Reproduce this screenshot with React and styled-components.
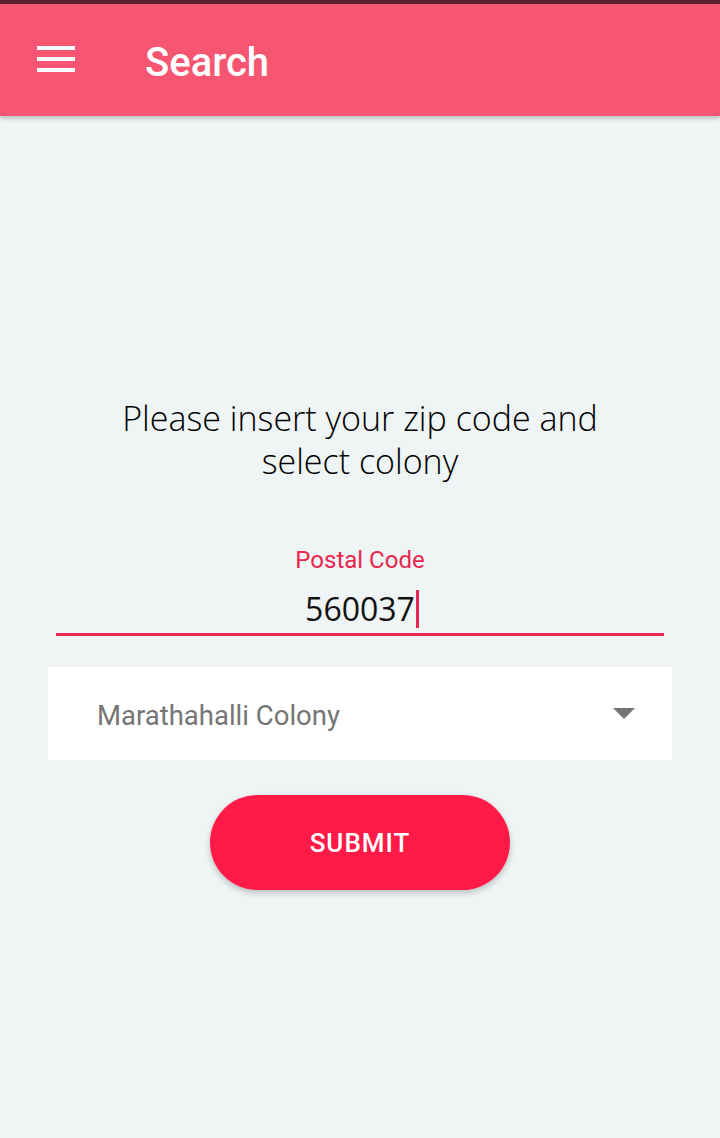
import React from "react";
import styled, { createGlobalStyle } from "styled-components";

const Global = createGlobalStyle`
  html, body { margin: 0; padding: 0; background: #eff4f4; }
  body { font-family: Roboto, "Noto Sans", sans-serif; }
  #root { min-height: 1138px; }
`;

const Page = styled.div`
  min-height: 1138px;
  background: #eff4f4;
  display: flex;
  flex-direction: column;
`;

const StatusEdge = styled.div`
  height: 4px;
  background: #5c2232;
`;

const AppBar = styled.header`
  height: 112px;
  background: #f75673;
  display: flex;
  align-items: center;
  padding-left: 37px;
  gap: 70px;
  box-shadow: 0 2px 5px rgba(0, 0, 0, 0.25);
  position: relative;
  z-index: 1;
`;

const MenuButton = styled.div`
  width: 38px;
  height: 26px;
  display: flex;
  flex-direction: column;
  justify-content: space-between;
  margin-top: -2px;
`;

const MenuLine = styled.span`
  display: block;
  height: 4px;
  background: #ffffff;
`;

const Title = styled.h1`
  margin: 0;
  font-family: Roboto, sans-serif;
  font-weight: 500;
  font-size: 40px;
  line-height: 48px;
  color: #ffffff;
  margin-top: 5px;
`;

const Content = styled.main`
  display: flex;
  flex-direction: column;
  align-items: center;
  padding: 281px 48px 0;
`;

const Prompt = styled.p`
  margin: 0;
  width: 500px;
  text-align: center;
  font-family: "Open Sans", "Noto Sans", sans-serif;
  font-weight: 300;
  font-size: 34px;
  line-height: 43px;
  color: #000000;
`;

const Field = styled.div`
  margin-top: 62px;
  width: 608px;
  display: flex;
  flex-direction: column;
  align-items: center;
  border-bottom: 3px solid #e8264f;
`;

const FieldLabel = styled.label`
  font-family: Roboto, sans-serif;
  font-size: 24px;
  line-height: 30px;
  color: #e8264f;
`;

const FieldValue = styled.div`
  display: flex;
  align-items: flex-end;
  height: 58px;
  box-sizing: border-box;
  padding: 0 0 5px 4px;
  font-family: "Open Sans", "Noto Sans", sans-serif;
  font-size: 32px;
  color: #111111;
`;

const ValueText = styled.span`
  line-height: 38px;
`;

const Caret = styled.span`
  display: inline-block;
  width: 3px;
  height: 38px;
  background: #e8264f;
  margin-left: 1px;
`;

const Select = styled.div`
  margin-top: 31px;
  width: 624px;
  height: 93px;
  background: #ffffff;
  display: flex;
  align-items: center;
  justify-content: space-between;
  box-sizing: border-box;
  padding: 3px 37px 0 49px;
`;

const SelectText = styled.span`
  font-family: Roboto, sans-serif;
  font-size: 27.5px;
  color: #757575;
`;

const Arrow = styled.span`
  width: 0;
  height: 0;
  margin-top: -3px;
  border-left: 11px solid transparent;
  border-right: 11px solid transparent;
  border-top: 11px solid #757575;
`;

const SubmitButton = styled.button`
  margin-top: 35px;
  width: 300px;
  height: 95px;
  border: none;
  border-radius: 48px;
  background: #ff1a47;
  color: #ffffff;
  font-family: Roboto, sans-serif;
  font-weight: 500;
  font-size: 26px;
  letter-spacing: 1px;
  box-shadow: 0 3px 6px rgba(0, 0, 0, 0.22);
`;

export default function App() {
  return (
    <Page>
      <Global />
      <StatusEdge />
      <AppBar>
        <MenuButton>
          <MenuLine />
          <MenuLine />
          <MenuLine />
        </MenuButton>
        <Title>Search</Title>
      </AppBar>
      <Content>
        <Prompt>Please insert your zip code and select colony</Prompt>
        <Field>
          <FieldLabel>Postal Code</FieldLabel>
          <FieldValue>
            <ValueText>560037</ValueText>
            <Caret />
          </FieldValue>
        </Field>
        <Select>
          <SelectText>Marathahalli Colony</SelectText>
          <Arrow />
        </Select>
        <SubmitButton>SUBMIT</SubmitButton>
      </Content>
    </Page>
  );
}
